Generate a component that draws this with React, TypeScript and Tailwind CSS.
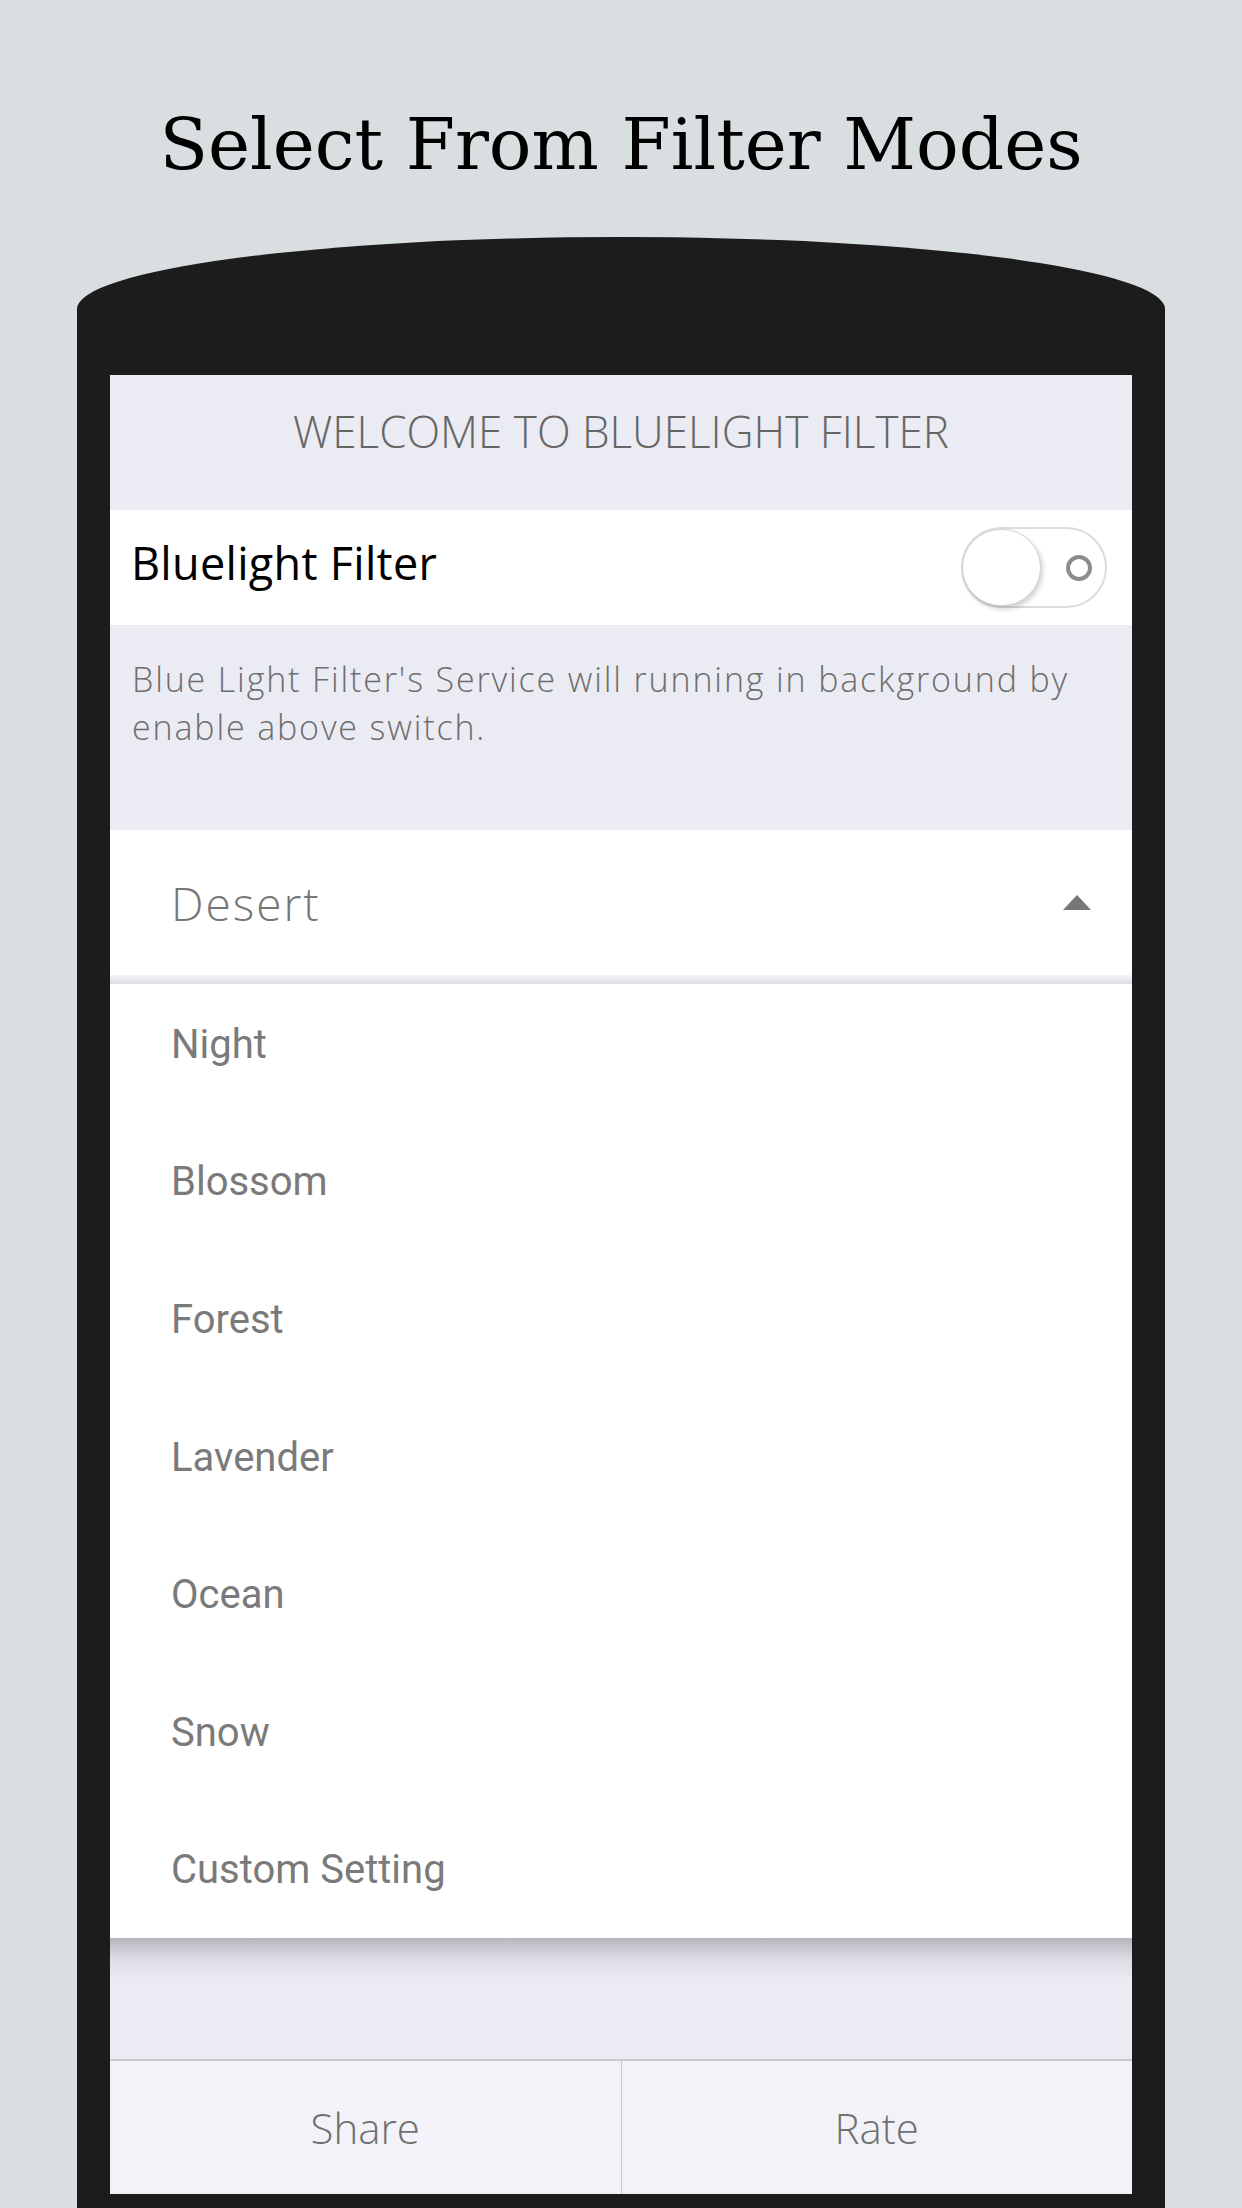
const modes = ['Night', 'Blossom', 'Forest', 'Lavender', 'Ocean', 'Snow', 'Custom Setting'];

const poppins = "font-['Open_Sans',sans-serif]";
const roboto = "font-['Roboto',sans-serif]";

function Toggle() {
  return (
    <div className="relative w-[146px] h-[81px] rounded-full border-2 border-[#dcdcdc] bg-white">
      <div className="absolute -left-[1px] top-[0px] w-[79px] h-[77px] rounded-full bg-white border border-[#d2d2d2] shadow-[2px_3px_5px_rgba(0,0,0,0.18)]" />
      <div className="absolute left-[103px] top-[26px] w-[26px] h-[26px] rounded-full border-[4px] border-[#8c8c8c]" />
    </div>
  );
}

export default function App() {
  return (
    <div className="w-[1242px] h-[2208px] overflow-hidden bg-[#d9dfe0] flex flex-col items-center">
      <h1 className="mt-[109px] text-[71px] leading-none text-black font-['DejaVu_Serif',serif]">
        Select From Filter Modes
      </h1>

      {/* phone body */}
      <div className="mt-[57px] w-[1088px] flex-1 flex bg-[#1c1c1c] rounded-t-[50%_72px] pt-[138px] px-[33px] pb-[14px]">
        <div className="flex-1 flex flex-col bg-[#ebebf3]">
          <div className={`h-[135px] flex justify-center pt-[34px] text-[44px] leading-none font-light text-[#666666] ${poppins}`}>
            WELCOME TO BLUELIGHT FILTER
          </div>

          <div className="h-[115px] bg-white flex items-center justify-between pl-[21px] pr-[25px]">
            <span className={`text-[45px] leading-none tracking-[0.3px] text-black -mt-[10px] ${poppins}`}>Bluelight Filter</span>
            <Toggle />
          </div>

          <div className={`h-[205px] pl-[22px] pr-[30px] pt-[30px] text-[34px] leading-[48px] font-light tracking-[1.85px] text-[#6e6e6e] ${poppins}`}>
            Blue Light Filter's Service will running in background by enable above switch.
          </div>

          <div className="h-[145px] bg-white flex items-center justify-between pl-[61px] pr-[41px]">
            <span className={`text-[46px] leading-none font-light tracking-[2px] text-[#777777] ${poppins}`}>Desert</span>
            <div className="w-0 h-0 border-l-[14px] border-r-[14px] border-b-[15px] border-l-transparent border-r-transparent border-b-[#767676]" />
          </div>

          <div className="relative bg-white flex flex-col">
            <div className="absolute left-0 right-0 top-0 h-[9px] bg-gradient-to-b from-[#f4f4f7] to-[#dcdce4]" />
            {modes.map((m) => (
              <div key={m} className="h-[137.6px] flex items-center pl-[61px] pt-[2px]">
                <span className={`text-[40px] leading-none text-[#7a7a7a] ${roboto}`}>{m}</span>
              </div>
            ))}
          </div>

          <div className="h-[42px] bg-gradient-to-b from-[#b6b6be] via-[#dcdce4] to-[#ebebf3]" />
          <div className="flex-1" />

          <div className="h-[135px] flex border-t-2 border-[#c9c9d1] bg-[#f3f2f8]">
            <div className={`flex-1 flex items-center justify-center text-[42px] font-light text-[#707070] border-r border-[#c8c8c8] ${poppins}`}>
              Share
            </div>
            <div className={`flex-1 flex items-center justify-center text-[42px] font-light text-[#707070] ${poppins}`}>
              Rate
            </div>
          </div>
        </div>
      </div>
    </div>
  );
}
